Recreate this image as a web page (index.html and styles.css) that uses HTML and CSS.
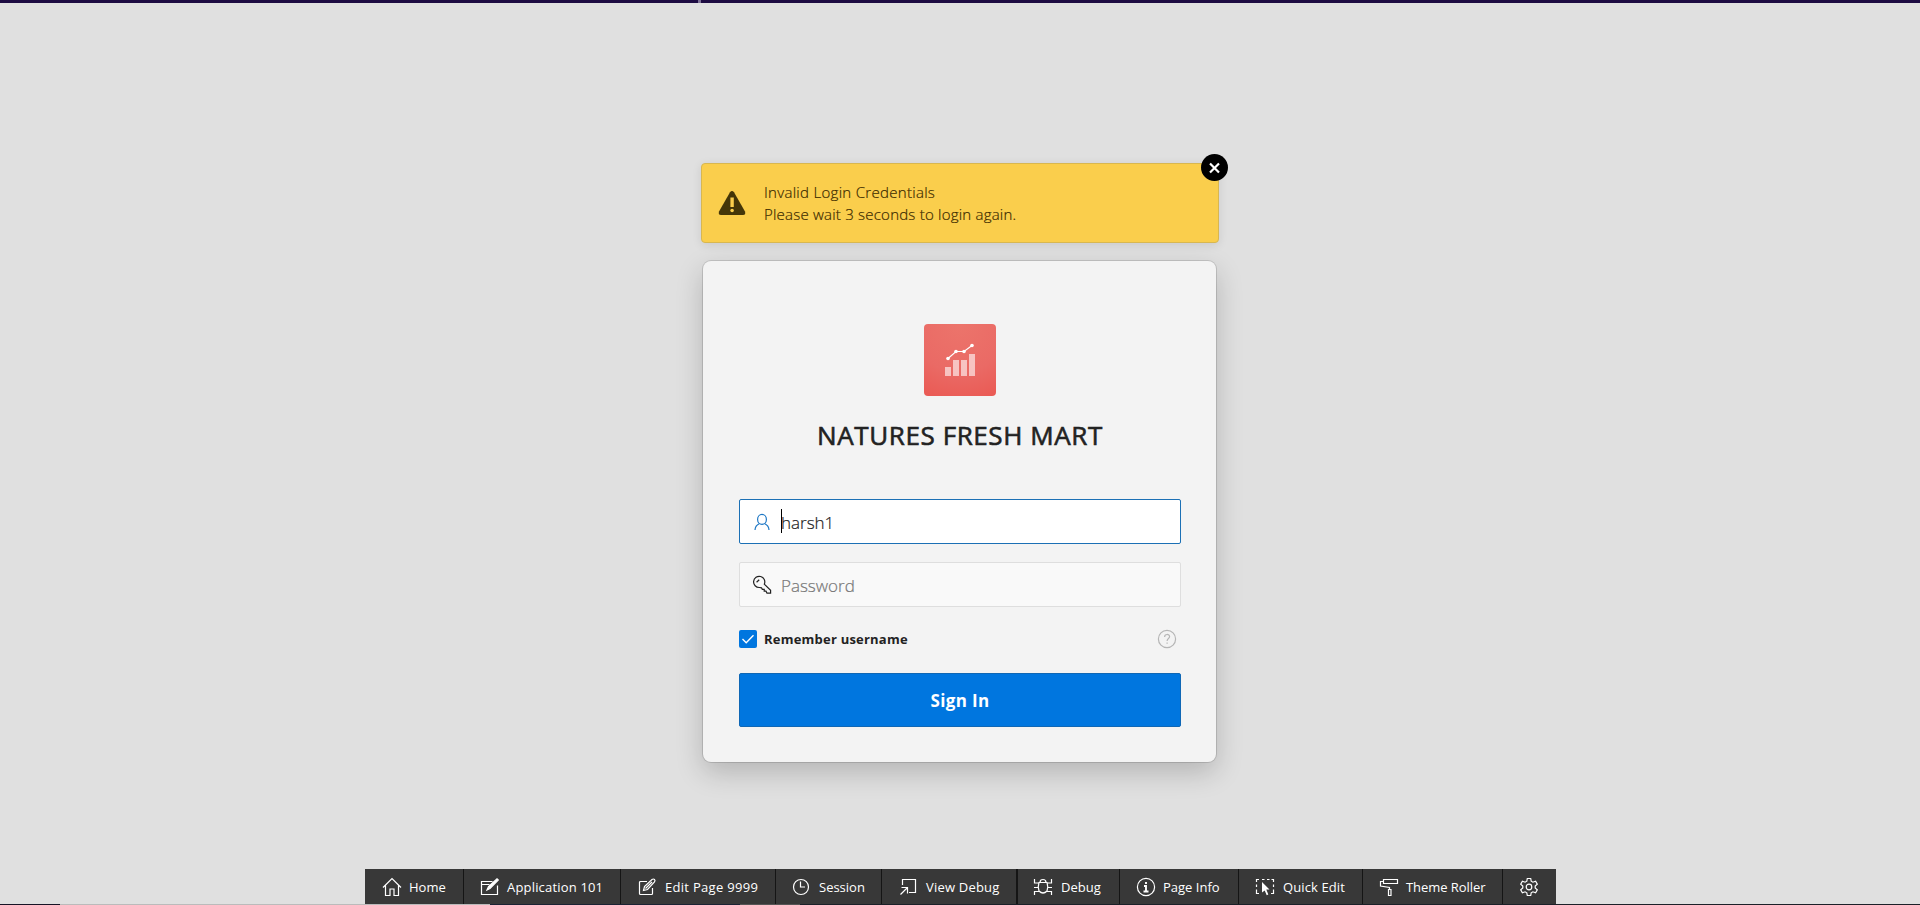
FILE: index.html
```html
<!DOCTYPE html>
<html lang="en">
<head>
<meta charset="utf-8">
<title>NATURES FRESH MART</title>
<link rel="stylesheet" href="styles.css">
</head>
<body>
<div class="page">
<div class="topline"></div>
<main class="login">
  <div class="alert">
    <svg class="warn" width="28" height="26" viewBox="0 0 28 26"><path d="M12 2.2Q14 0 16 2.2L27 21.5Q28 25 25 25H3Q0 25 1 21.5Z" fill="#443608"/><path d="M12.4 7.500h3.400v9.500h-3.400z" fill="#face4c"/><circle cx="14.1" cy="20.5" r="1.8" fill="#face4c"/></svg>
    <div class="alert-text"><div class="line-one">Invalid Login Credentials</div><div class="line-two">Please wait 3 seconds to login again.</div></div>
    <button class="close" aria-label="Close"><svg width="27" height="27" viewBox="0 0 27 27"><path d="M9 9.5l9 9M18 9.5l-9 9" stroke="#fff" stroke-width="2.2"/></svg></button>
  </div>
  <section class="card">
    <div class="logo"><svg width="72" height="72" viewBox="0 0 72 72"><g fill="#fff" fill-opacity=".6"><path d="M21 43h6v9h-6zM29 36h6v16h-6zM37 36h6v16h-6zM45 30h6v22h-6z"/></g><path d="M24 34.5l8-7h8l8-6" fill="none" stroke="#fff" stroke-width="1.2"/><g fill="#fff"><circle cx="24" cy="34.5" r="1.8"/><circle cx="32" cy="27.5" r="1.8"/><circle cx="40" cy="27.5" r="1.8"/><circle cx="48" cy="21.5" r="1.8"/></g></svg></div>
    <h1 class="title">NATURES FRESH MART</h1>
    <div class="field focused"><svg width="20" height="20" viewBox="0 0 20 20" fill="none" stroke="#1c76c4" stroke-width="1.2"><ellipse cx="10" cy="7.4" rx="4.4" ry="5"/><path d="M7.2 11.8C4.5 13 3.2 15 3 18M12.8 11.8C15.5 13 16.8 15 17 18"/></svg><span class="caret"></span><span class="value">harsh1</span></div>
    <div class="field"><svg width="20" height="20" viewBox="0 0 20 20" fill="none" stroke="#222" stroke-width="1.2"><path d="M12.3 9.2A5.6 5.6 0 1 0 7.5 12.5L9.5 12.8L10.3 14.3H12.2V16.2H14L15 18.2H18.6V15.2Z"/><path d="M4.6 7.2L7.2 4.8"/></svg><span class="value placeholder">Password</span></div>
    <div class="options"><span class="check"><svg width="18" height="18" viewBox="0 0 18 18"><path d="M3.5 9l3.7 3.7 7.3-7.4" fill="none" stroke="#fff" stroke-width="1.4"/></svg></span><span class="remember">Remember username</span>
      <svg class="help" width="20" height="20" viewBox="0 0 20 20" fill="none" stroke="#b5b5b5" stroke-width="1.2"><circle cx="10" cy="10" r="8.6"/><path d="M7.6 8c0-3.4 5-3.2 5-.4 0 2-2.5 2-2.5 4.4M10.1 13.4v1.4"/></svg></div>
    <button class="signin"><span>Sign In</span></button>
  </section>
</main>
<nav class="toolbar">
  <div class="item home"><svg viewBox="0 0 20 20"><path d="M1 10.5L10 1.5l9 9M3.5 8.5v10h4.5v-6.5h4v6.5h4.500v-10"/></svg><span>Home</span></div>
  <div class="item app"><svg viewBox="0 0 20 20"><path d="M12.500 4.500h-11v13h16v-9M1.500 7.500h8"/><path d="M7 13l1.500-3.500L17 1.800l1.300 1.300L10 11.500z" fill="#fff"/></svg><span>Application 101</span></div>
  <div class="item edit"><svg viewBox="0 0 20 20"><path d="M10 4.500H3.500q-1 0-1 1v11q0 1 1 1h11q1 0 1-1V11M6.500 13.500l1-4L15 2.500q1.500-1 2.500 0t0 2.500L10.500 12.500zM8.500 11.500l6.500-6.500"/></svg><span>Edit Page 9999</span></div>
  <div class="item session"><svg viewBox="0 0 20 20"><circle cx="10" cy="10" r="7.500"/><path d="M9.500 4.500v5.500h4.500"/></svg><span>Session</span></div>
  <div class="item view"><svg viewBox="0 0 20 20"><path d="M4.500 8V2.500h13v13H11M2.500 17.500L9.500 10.500M3.500 10.500h6v6"/></svg><span>View Debug</span></div>
  <div class="item debug"><svg viewBox="0 0 20 20"><path d="M6 5.500h8q1.500 4.500 0 8.500Q10 18 6 14 4.500 10 6 5.500zM7 5.500q0-3 3-3t3 3M1.500 2v4h4M18.500 2v4h-4M1 10.500h4M15 10.500h4M1.500 18v-3.500h5M18.500 18v-3.500h-5"/></svg><span>Debug</span></div>
  <div class="item info"><svg viewBox="0 0 20 20"><circle cx="10" cy="10" r="8.600"/><path d="M10 5v2M8 9h2v5.500M7.500 14.500h5" stroke-width="1.900"/></svg><span>Page Info</span></div>
  <div class="item quick"><svg viewBox="0 0 20 20"><path d="M1.500 5V2.500H4M7 2.500h2.500M12 2.500h2.500M16.500 2.500h2V5M18.500 7.500V10M18.500 12.500v4H16M1.500 7.500V10M1.500 12.500v4H4"/><path d="M7 5l7.500 7.500h-3.200l2 5-1.600.700-2-4.800L7 15.500z" fill="#fff" stroke="none"/></svg><span>Quick Edit</span></div>
  <div class="item theme"><svg viewBox="0 0 20 20"><path d="M4.500 2.500h14v4h-14zM4.500 4.500h-3v4.500l9 1.500v2M9.500 12.500h2.500v6H9.500z"/></svg><span>Theme Roller</span></div>
  <div class="item gear"><svg viewBox="0 0 20 20"><path d="M8.300 1.500h3.400l.5 2.700 1.700 1 2.700-1 1.700 3-2.100 1.800v2l2.100 1.800-1.700 3-2.700-1-1.700 1-.5 2.700H8.300l-.5-2.700-1.700-1-2.700 1-1.700-3L3.800 11V9L1.700 7.200l1.700-3 2.700 1 1.700-1z"/><circle cx="10" cy="10" r="2.800"/></svg></div>
</nav>
<div class="bottomline"></div>
</div>
</body>
</html>
```
FILE: styles.css
```css
* { box-sizing: border-box; }
body { margin: 0; font-family: "Open Sans", "Noto Sans", sans-serif; color: #222; }
.page { width: 1920px; height: 905px; background: #e0e0e0; display: flex; flex-direction: column; overflow: hidden; }
.topline { height: 3px; background: linear-gradient(90deg, #1d0b42 698px, #7d7096 698px, #7d7096 701px, #1d0b42 701px); flex: none; }
.login { height: 866px; padding-top: 160px; flex: none; }
.alert { position: relative; margin-left: 701px; width: 518px; height: 80px; border: 1px solid #d8b750; border-radius: 4px; background: #face4c; display: flex; padding: 17px 0 0 16px; box-shadow: 0 2px 10px rgba(0,0,0,.1); }
.warn { margin-top: 9px; flex: none; }
.alert-text { margin-left: 18px; font-size: 15px; line-height: 22px; color: #3a2a00; font-weight: 300; white-space: nowrap; -webkit-text-stroke: .2px #3a2a00; }
.line-one { letter-spacing: .3px; }
.line-two { letter-spacing: .22px; }
.close { position: absolute; right: -10px; top: -10px; width: 27px; height: 27px; padding: 0; border: 0; border-radius: 50%; background: #000; }
.close svg { display: block; }
.card { margin: 18px 0 0 703px; width: 513px; height: 501px; background: #f3f3f3; border-radius: 8px; padding: 63px 35px 0 36px; box-shadow: 0 0 0 1px rgba(0,0,0,.13), 0 10px 28px rgba(0,0,0,.2); }
.logo { width: 72px; height: 72px; margin: 0 auto; border-radius: 4px; background: radial-gradient(circle at 50% 0, #ec746b, #ea6a65 60%, #ea5953); }
.logo svg { display: block; }
.title { margin: 20px -20px 44px; height: 39px; font-size: 26px; line-height: 39px; font-weight: 500; text-align: center; white-space: nowrap; letter-spacing: .6px; -webkit-text-stroke: .6px #222; }
.field { height: 45px; border: 1px solid #dedede; border-radius: 2px; background: #f9f9f9; display: flex; align-items: center; padding-left: 12px; margin-bottom: 18px; }
.field svg { flex: none; margin-right: 9px; }
.focused { background: #fff; border-color: #1c70b5; }
.caret { width: 1px; height: 24px; background: #000; margin: -2px -1px 0 0; }
.value { font-size: 17px; line-height: 24px; font-weight: 300; padding-top: 2px; -webkit-text-stroke: .2px #222; }
.placeholder { color: #777; -webkit-text-stroke-color: #777; }
.options { display: flex; align-items: center; height: 18px; margin: 23px 0 25px; }
.check { width: 18px; height: 18px; background: #0076df; border-radius: 2px; }
.check svg { display: block; }
.remember { margin-left: 7px; font-size: 13px; font-weight: 700; white-space: nowrap; letter-spacing: .22px; }
.help { margin-left: auto; margin-right: 4px; }
.signin { display: block; width: 442px; height: 54px; border: 1px solid #0f67b5; border-radius: 2px; background: #0076df; color: #fff; font: 700 17px/24px "Open Sans", "Noto Sans", sans-serif; letter-spacing: .35px; padding: 2px 0 0; }
.toolbar { display: flex; height: 35px; width: 1191px; margin-left: 365px; background: #383838; color: #fff; flex: none; }
.item { display: flex; align-items: center; padding-left: 17px; border-right: 1px solid #151515; font-size: 13px; white-space: nowrap; flex: none; }
.item svg { width: 20px; height: 20px; fill: none; stroke: #fff; stroke-width: 1.2; margin-right: 7px; flex: none; }
.home { width: 99px; }
.app { width: 157px; padding-left: 16px; letter-spacing: .18px; }
.edit { width: 155px; padding-left: 16px; letter-spacing: .3px; }
.edit svg { margin-right: 8px; }
.session { width: 106px; padding-left: 15px; }
.session svg { margin-right: 8px; }
.view { width: 135px; padding-left: 16px; letter-spacing: .2px; }
.view svg { margin-right: 8px; }
.debug { width: 103px; padding-left: 15px; border-left: 1px solid #151515; }
.debug svg { margin-right: 8px; }
.info { width: 119px; padding-left: 16px; }
.quick { width: 124px; padding-left: 16px; letter-spacing: .1px; }
.quick svg { margin-right: 8px; }
.theme { width: 140px; padding-left: 16px; letter-spacing: -.05px; }
.gear { border: 0; padding-left: 16px; }
.bottomline { height: 1px; flex: none; background: linear-gradient(90deg, #171426 60px, #bbb 60px, #bbb 490px, #1b2233 490px, #1b2233 740px, #555 740px, #555 800px, #1b2028 800px); }
```
